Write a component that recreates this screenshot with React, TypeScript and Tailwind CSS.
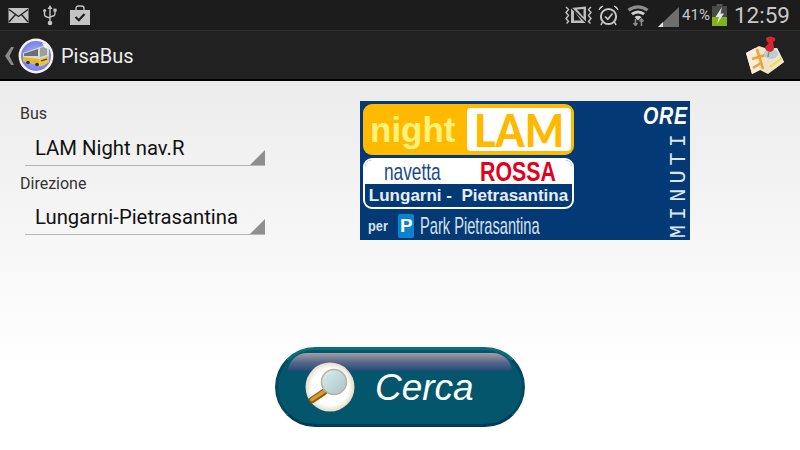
// PisaBus search screen, drawn as it appears on the phone.
import React from "react";

const roboto = "font-['Roboto',sans-serif]";
const arial = "font-['Liberation_Sans',Arial,sans-serif]";

function MailIcon() {
  return (
    <svg width="21" height="15" viewBox="0 0 21 15" className="mt-[1px]">
      <rect x="0.5" y="0" width="20" height="15" fill="#c4c4c4" />
      <path d="M1 1.5 L10.5 8.5 L20 1.5 M1 14 L7.5 6.5 M20 14 L13.5 6.5" stroke="#1e1e1e" strokeWidth="1.3" fill="none" />
    </svg>
  );
}

function UsbIcon() {
  return (
    <svg width="14" height="22" viewBox="0 0 14 22">
      <path d="M7 1 L9.5 5 H4.5 Z" fill="#c4c4c4" />
      <path d="M7 4 V19 M1.5 7 V10.5 Q1.5 12.5 4 13 L7 14 M12 6.5 V9.5 Q12 11.5 10 12 L7 13" stroke="#c4c4c4" strokeWidth="1.4" fill="none" />
      <circle cx="7" cy="19" r="2.3" fill="#c4c4c4" />
      <circle cx="1.6" cy="6.5" r="1.5" fill="#c4c4c4" />
      <rect x="10.4" y="4.6" width="3.2" height="3" fill="#c4c4c4" />
    </svg>
  );
}

function BagIcon() {
  return (
    <svg width="20" height="20" viewBox="0 0 20 20">
      <path d="M6 6 V3.5 Q6 1 8.5 1 H11.5 Q14 1 14 3.5 V6" stroke="#c4c4c4" strokeWidth="1.4" fill="none" />
      <rect x="0" y="5" width="20" height="15" fill="#c4c4c4" />
      <path d="M5.5 12 L8.8 15.2 L14.5 9" stroke="#1e1e1e" strokeWidth="2.2" fill="none" />
    </svg>
  );
}

function VibrateMuteIcon() {
  return (
    <svg width="27" height="18" viewBox="0 0 27 18">
      <path d="M1 1 L3.5 3.5 L1 6.5 L3.5 9.5 L1 12.5 L3.5 15.5 L1.5 17.5 M26 1 L23.5 3.5 L26 6.5 L23.5 9.5 L26 12.5 L23.5 15.5 L25.5 17.5" stroke="#c4c4c4" strokeWidth="1.4" fill="none" />
      <path d="M6 2 L21 0.5 V17 L6 17 Z" fill="#bdbdbd" />
      <path d="M9 5 L9 14.5 L16 14.5 Z" fill="#1c1c1c" />
      <path d="M12 3.5 L18.5 3 L18.5 11 Z" fill="#1c1c1c" />
      <path d="M5 0.5 L22 17.5" stroke="#1c1c1c" strokeWidth="1.3" />
    </svg>
  );
}

function AlarmIcon() {
  return (
    <svg width="21" height="21" viewBox="0 0 21 21">
      <circle cx="10.5" cy="11.5" r="7.6" fill="none" stroke="#c8c8c8" strokeWidth="2" />
      <path d="M1 5 Q1.5 1.5 5 1 Z M20 5 Q19.5 1.5 16 1 Z" fill="#c8c8c8" stroke="#c8c8c8" />
      <path d="M7 11.5 L9.8 14.2 L14.5 8.5" stroke="#c8c8c8" strokeWidth="1.7" fill="none" />
      <path d="M4.5 17 L3 20 M16.5 17 L18 20" stroke="#c8c8c8" strokeWidth="1.6" />
    </svg>
  );
}

function WifiIcon() {
  return (
    <svg width="22" height="22" viewBox="0 0 22 22">
      <path d="M0.5 5 Q11 -2.5 21.5 5 L19.5 7.5 Q11 1.5 2.5 7.5 Z" fill="#8c8c8c" />
      <path d="M4 9 Q11 4 18 9 L16.2 11.2 Q11 7.6 5.8 11.2 Z" fill="#d0d0d0" />
      <path d="M7.5 13 Q11 10.6 14.5 13 L11 16.5 Z" fill="#d0d0d0" />
      <path d="M8.5 15 V21 M6.5 19 L8.5 21.5 L10.5 19" stroke="#8c8c8c" strokeWidth="1.6" fill="none" />
      <path d="M14.5 22 V15 M12.5 17.5 L14.5 15 L16.5 17.5" stroke="#8c8c8c" strokeWidth="1.6" fill="none" />
    </svg>
  );
}

function SignalIcon() {
  return (
    <svg width="21" height="20" viewBox="0 0 21 20">
      <path d="M21 0 V20 H0 Z" fill="#6e6e6e" />
      <path d="M5 15 V20 H0 Z" fill="#e4e4e4" />
    </svg>
  );
}

function BatteryIcon() {
  return (
    <svg width="15" height="22" viewBox="0 0 15 22">
      <rect x="4.5" y="0" width="6" height="2" fill="#555" />
      <rect x="0" y="2" width="15" height="20" fill="#4a4a4a" />
      <rect x="0" y="13" width="15" height="9" fill="#7fb21c" />
      <path d="M10 3 L3.5 13 H7 L5 20 L12 9.5 H8.5 Z" fill="#e6e6e6" />
    </svg>
  );
}

function BusAvatar() {
  return (
    <svg width="36" height="36" viewBox="0 0 36 36">
      <defs>
        <radialGradient id="busBg" cx="0.5" cy="0.5" r="0.55">
          <stop offset="0" stopColor="#b9bcf6" />
          <stop offset="1" stopColor="#7079e9" />
        </radialGradient>
      </defs>
      <circle cx="18" cy="18" r="17.4" fill="#f4f4f4" />
      <circle cx="18" cy="18" r="15" fill="url(#busBg)" />
      {/* bus body, seen from the front right */}
      <path d="M5 15 L22 9 L27 7 L31 10 L31 24 L24 28 L5 23 Z" fill="#d9dad6" />
      <path d="M5 19 L21 21 V27 L5 23 Z" fill="#e3b62c" />
      <path d="M21 21 L31 18 V24 L24 28 H21 Z" fill="#e9c53c" />
      <path d="M6 15.5 L20 11 V18 L6 18 Z" fill="#6a7072" />
      <path d="M22 10 L29 8 V17 L22 19 Z" fill="#9aa0a2" />
      <path d="M24 5 L28 6 L31 11 L27 10 Z" fill="#f7f7f7" />
      <path d="M23 23 L29 21" stroke="#333" strokeWidth="1.2" />
      <circle cx="10" cy="24.5" r="1.8" fill="#333" />
      <circle cx="19" cy="26.5" r="1.8" fill="#333" />
    </svg>
  );
}

function MapPinIcon() {
  return (
    <svg width="40" height="40" viewBox="0 0 40 40">
      <path d="M1 17 L14 10 L23 13 L32 12 L39 26 L23 38 L15 34 L7 38 Z" fill="#f1e3c6" />
      <path d="M1 17 L7 38 L15 34 L10 12 Z" fill="#f7eedd" />
      <path d="M23 13 L32 12 L39 26 L28 34 Z" fill="#ede6d4" />
      <path d="M7 23 L20 19 M12 13 L18 33 M8 32 L16 27" stroke="#f0a33c" strokeWidth="2.6" fill="none" />
      <path d="M25 31 L37 22" stroke="#f2dc52" strokeWidth="2.4" fill="none" />
      <ellipse cx="26" cy="18" rx="7" ry="5" fill="#b7ced4" />
      <path d="M21 2 Q25 -1 30 2 Q31 5 28 6 L29 12 Q29 15 25 16 Q20 15 20 11 L24 7 Q21 6 21 2 Z" fill="#d9242f" />
      <path d="M24 15 L23 21" stroke="#8a8a8a" strokeWidth="1.5" />
    </svg>
  );
}

function MagnifierIcon() {
  return (
    <svg width="50" height="50" viewBox="0 0 50 50">
      <defs>
        <radialGradient id="discBg" cx="0.5" cy="0.5" r="0.5">
          <stop offset="0.75" stopColor="#ffffff" />
          <stop offset="1" stopColor="#e5dcc4" />
        </radialGradient>
        <linearGradient id="lens" x1="0" y1="0" x2="1" y2="1">
          <stop offset="0" stopColor="#dfeeee" />
          <stop offset="1" stopColor="#a9c4c8" />
        </linearGradient>
      </defs>
      <circle cx="25" cy="25" r="24.5" fill="url(#discBg)" />
      <path d="M7 38 L19 30" stroke="#8a5a10" strokeWidth="6.5" strokeLinecap="round" />
      <path d="M7 37.5 L19 29.5" stroke="#d89a2a" strokeWidth="3.5" strokeLinecap="round" />
      <circle cx="29" cy="20" r="12.5" fill="url(#lens)" stroke="#b5b2a4" strokeWidth="1.5" />
    </svg>
  );
}

function Spinner({ value }: { value: string }) {
  return (
    <div className="relative ml-[5px] flex h-[37px] w-[240px] items-center border-b border-[#b5b5b5] pl-[10px] pt-[3px]">
      <span className="text-[20.3px] leading-none text-[#111]">{value}</span>
      <span className="absolute bottom-0 right-0 size-0 border-b-[15px] border-l-[15px] border-b-[#8f8f8f] border-l-transparent" />
    </div>
  );
}

function Banner() {
  return (
    <div className={`${arial} flex h-[139px] w-[330px] shrink-0 bg-[#033a75] pl-[3px] pt-[3px]`}>
      <div className="flex w-[211px] flex-col">
        <div className="flex h-[51px] items-center rounded-[9px] bg-[#ffba00] pr-[3px]">
          <span className="w-[104px] pl-[7px] text-[35px] font-bold leading-none text-[#fff27a]">night</span>
          <span className="flex h-[43px] flex-1 items-center justify-center rounded-[4px] bg-white font-['Lato',sans-serif] text-[46px] font-black leading-none text-[#ffba00]">
            <span className="scale-x-[0.9]">LAM</span>
          </span>
        </div>
        <div className="mt-[3px] flex h-[51px] flex-col rounded-[9px] border-2 border-white bg-[#033a75]">
          <div className="flex h-[24px] items-center rounded-t-[7px] bg-white">
            <span className="ml-[19px] w-[96px] shrink-0 origin-left scale-x-[0.72] whitespace-nowrap text-[24px] leading-none text-[#17498a]">navetta</span>
            <span className="origin-left scale-x-[0.79] text-[27px] font-bold leading-none text-[#e2001a]">ROSSA</span>
          </div>
          <div className="flex flex-1 items-center justify-center whitespace-nowrap text-[17px] font-bold leading-none text-[#e8eef5]">
            Lungarni -&nbsp; Pietrasantina
          </div>
        </div>
        <div className="mt-[4px] flex h-[25px] items-center pl-[5px] text-[#d6e0ec]">
          <span className="w-[30px] origin-left scale-x-[0.85] text-[15px] font-bold leading-none">per</span>
          <span className="ml-[7px] flex h-[24px] w-[16px] shrink-0 items-center justify-center rounded-[2px] bg-[#0a84d0] text-[19px] font-bold leading-none text-white">P</span>
          <span className="ml-[6px] origin-left scale-x-[0.61] whitespace-nowrap text-[24px] leading-none">Park Pietrasantina</span>
        </div>
      </div>
      <div className="flex flex-1 flex-col items-end pr-[2px]">
        <span className="origin-right scale-x-[0.82] text-[24px] font-bold italic leading-[24px] tracking-[1px] text-white">ORE</span>
        <span className="mt-[1px] rotate-180 font-['Liberation_Mono',monospace] text-[22px] leading-[16px] tracking-[5px] text-[#dfe6ef] [writing-mode:vertical-rl]">
          MINUTI
        </span>
      </div>
    </div>
  );
}

export default function App() {
  return (
    <div className={`${roboto} flex h-[450px] w-[800px] flex-col overflow-hidden bg-white`}>
      <div className="flex h-[31px] items-center justify-between border-b border-[#2e2e2e] bg-[#1c1c1c] pr-[10px]">
        <div className="flex items-center pl-[8px]">
          <MailIcon />
          <span className="ml-[14px]"><UsbIcon /></span>
          <span className="ml-[13px]"><BagIcon /></span>
        </div>
        <div className="flex items-center">
          <VibrateMuteIcon />
          <span className="ml-[6px]"><AlarmIcon /></span>
          <span className="ml-[8px]"><WifiIcon /></span>
          <span className="ml-[9px] mt-[4px]"><SignalIcon /></span>
          <span className="ml-[3px] text-[15px] leading-none text-[#c8c8c8]">41%</span>
          <span className="ml-[2px]"><BatteryIcon /></span>
          <span className="ml-[7px] text-[22.5px] leading-none text-[#c8c8c8]">12:59</span>
        </div>
      </div>
      <div className="flex h-[50px] items-center justify-between border-b-2 border-black bg-[#212121] pr-[15px] pt-[2px]">
        <div className="flex items-center pl-[5px]">
          <svg width="9" height="18" viewBox="0 0 9 18">
            <path d="M9 0 H6 L0 9 L6 18 H9 L4.5 9 Z" fill="#8a8a8a" />
          </svg>
          <span className="ml-[4px]"><BusAvatar /></span>
          <span className="ml-[7px] text-[20px] leading-none text-[#eeeeee]">PisaBus</span>
        </div>
        <MapPinIcon />
      </div>
      <div className="flex flex-1 flex-col bg-gradient-to-b from-[#ececec] to-white to-[78%]">
        <div className="flex items-start pl-[20px] pt-[20px]">
          <div className="w-[340px]">
            <div className="pt-[3px] text-[16px] leading-[20px] text-[#333]">Bus</div>
            <div className="mt-[5px]"><Spinner value="LAM Night nav.R" /></div>
            <div className="mt-[8px] text-[16px] leading-[20px] text-[#333]">Direzione</div>
            <div className="mt-[4px]"><Spinner value="Lungarni-Pietrasantina" /></div>
          </div>
          <Banner />
        </div>
        <div className="mt-[107px] flex justify-center">
          <button className="relative flex h-[80px] w-[250px] items-center rounded-full border-[3px] border-b-[#003c55] border-l-[#01495f] border-r-[#01495f] border-t-[#0a6c7c] bg-[#03566b] pl-[27px]">
            <span className="absolute left-[10px] right-[10px] top-[3px] h-[19px] rounded-t-full bg-gradient-to-b from-[#a39ea3] via-[#56668a] to-[#0e4a72]" />
            <span className="relative"><MagnifierIcon /></span>
            <span className={`${arial} relative ml-[20px] text-[37px] italic leading-none text-white`}>Cerca</span>
          </button>
        </div>
      </div>
    </div>
  );
}
